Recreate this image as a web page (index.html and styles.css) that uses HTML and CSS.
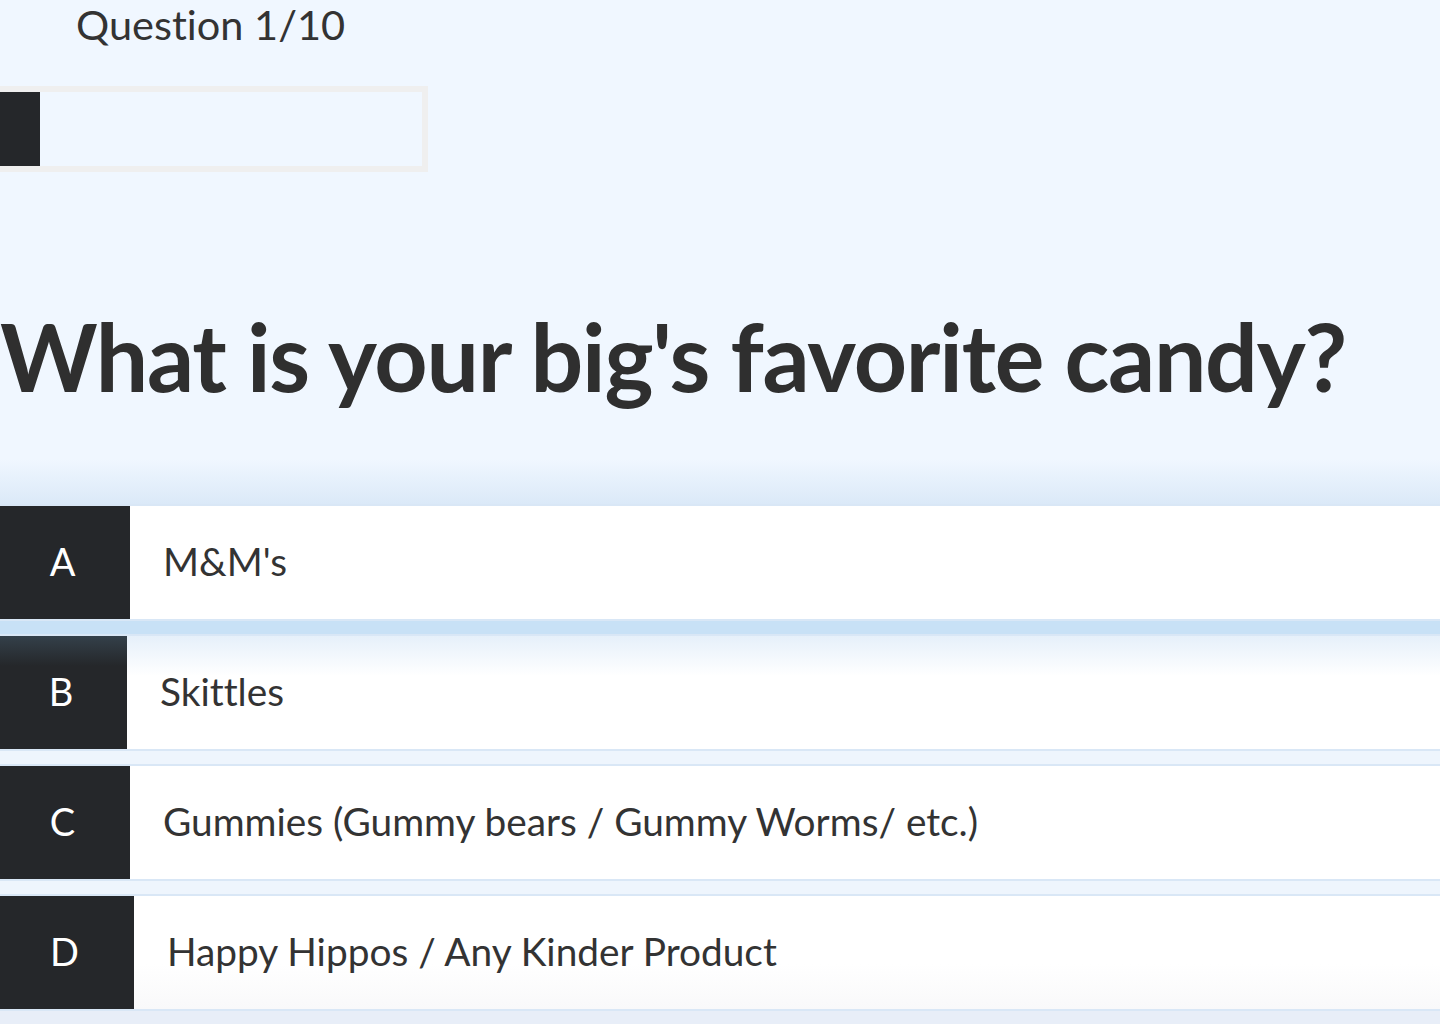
FILE: index.html
```html
<!DOCTYPE html>
<html lang="en">
<head>
<meta charset="utf-8">
<title>Quiz</title>
<link rel="stylesheet" href="styles.css">
</head>
<body>
<main class="quiz">
  <header class="quiz-head">
    <div class="counter">Question 1/10</div>
    <div class="progress"><div class="progress-fill"></div></div>
    <h1 class="question">What is your big's favorite candy?</h1>
  </header>
  <ul class="options">
    <li class="option option--active"><span class="letter letter--a">A</span><span class="answer">M&amp;M's</span></li>
    <li class="option option--hover"><span class="letter letter--b">B</span><span class="answer">Skittles</span></li>
    <li class="option"><span class="letter letter--c">C</span><span class="answer">Gummies (Gummy bears / Gummy Worms/ etc.)</span></li>
    <li class="option option--last"><span class="letter letter--d">D</span><span class="answer">Happy Hippos / Any Kinder Product</span></li>
  </ul>
</main>
</body>
</html>
```
FILE: styles.css
```css
html, body {
  margin: 0;
  padding: 0;
}
body {
  background: #e8eef8;
  color: #333333;
  font-family: Lato, "Open Sans", sans-serif;
  font-variant-ligatures: none;
  height: 1024px;
  overflow: hidden;
}
.quiz-head {
  background: linear-gradient(#f0f7ff 0, #f0f7ff 91%, #dbe9f8 100%);
  height: 504px;
  display: flex;
  flex-direction: column;
}
.counter {
  font-size: 41.5px;
  line-height: 48px;
  padding-left: 76px;
}
.progress {
  margin-top: 38px;
  width: 422px;
  height: 74px;
  border: 6px solid #efefef;
  border-left: 0;
  background: #f0f7ff;
}
.progress-fill {
  width: 40px;
  height: 100%;
  background: #25272a;
}
.question {
  margin: 134px 0 0 0;
  font-family: Lato, sans-serif;
  font-weight: 700;
  font-size: 93px;
  letter-spacing: -1.25px;
  line-height: 100px;
  color: #2f2f2f;
  white-space: nowrap;
}
.options {
  list-style: none;
  margin: 0;
  padding: 0;
  display: flex;
  flex-direction: column;
  gap: 13px;
  background: #eef5fd;
}
.option {
  display: flex;
  align-items: center;
  height: 113px;
  background: #ffffff;
  border-top: 2px solid #d9e7f6;
  border-bottom: 2px solid #d9e7f6;
}
.option--active {
  box-shadow: 0 15px 0 #c8e1f6;
}
.option--hover {
  background: linear-gradient(#e6f0fa 0, #ffffff 40px);
}
.option--last {
  background: linear-gradient(#ffffff 0, #ffffff 60%, #f9f9fa 100%);
}
.letter {
  flex: none;
  width: 130px;
  height: 100%;
  display: flex;
  align-items: center;
  justify-content: center;
  background: #25272a;
  color: #ffffff;
  font-size: 38px;
  padding: 0 5px 3px 0;
  box-sizing: border-box;
}
.letter--b {
  width: 127px;
  background: linear-gradient(#34404a 0, #25272a 30px);
}
.letter--d {
  width: 134px;
}
.answer {
  padding-left: 33px;
  padding-bottom: 3px;
  font-size: 38.8px;
  white-space: nowrap;
}
```
